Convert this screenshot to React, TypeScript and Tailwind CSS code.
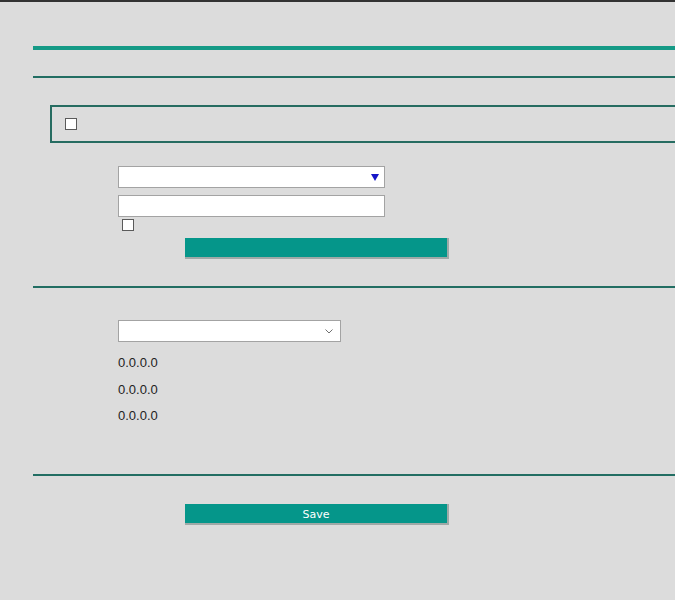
import React from "react";

function Box() {
  return <div className="w-[12px] h-[12px] border border-[#5a5a5a] bg-white" />;
}

export default function App() {
  return (
    <div className="min-h-[600px] w-[675px] overflow-hidden bg-[#dcdcdc] border-t-2 border-[#333333] font-['Liberation_Sans',Arial,sans-serif]">
      <div className="ml-[33px] flex flex-col">
        <div className="mt-[44px] h-[4px] bg-[#159a86]" />
        <div className="mt-[26px] h-[2px] bg-[#226e63]" />
        <div className="mt-[27px] ml-[17px] -mr-[20px] h-[38px] border-2 border-[#266c61] pl-[13px] pt-[11px]">
          <Box />
        </div>
        <div className="ml-[85px] mt-[23px] flex flex-col items-start">
          <div className="relative w-[267px] h-[22px] bg-white border border-[#a3a3a3]">
            <svg className="absolute right-[5px] top-[7px]" width="8" height="7" viewBox="0 0 8 7">
              <polygon points="0,0 8,0 4,7" fill="#1616c8" />
            </svg>
          </div>
          <div className="mt-[7px] w-[267px] h-[22px] bg-white border border-[#a3a3a3]" />
          <div className="mt-[2px] ml-[4px]">
            <Box />
          </div>
          <div className="mt-[7px] ml-[67px] w-[264px] h-[21px] bg-[#05968a] border-r-2 border-b-2 border-[#9fa9a7]" />
        </div>
        <div className="mt-[27px] h-[2px] bg-[#226e63]" />
        <div className="ml-[85px] mt-[32px] flex flex-col items-start">
          <div className="relative w-[223px] h-[22px] bg-white border border-[#a3a3a3]">
            <svg className="absolute right-[7px] top-[8px]" width="8" height="5" viewBox="0 0 8 5">
              <polyline points="0.5,0.5 4,4 7.5,0.5" fill="none" stroke="#707070" strokeWidth="1" />
            </svg>
          </div>
          <div className="mt-[8px] flex flex-col text-[13px] leading-[26px] text-[#222]">
            <span>0.0.0.0</span>
            <span className="mt-[0.5px]">0.0.0.0</span>
            <span className="mt-[0.5px]">0.0.0.0</span>
          </div>
        </div>
        <div className="mt-[45px] h-[2px] bg-[#226e63]" />
        <div className="ml-[152px] mt-[28px] w-[264px] h-[21px] bg-[#05968a] border-r-2 border-b-2 border-[#9fa9a7] flex items-center justify-center pt-[3px] text-white text-[11px] font-['DejaVu_Sans',Verdana,sans-serif]">
          Save
        </div>
      </div>
    </div>
  );
}
